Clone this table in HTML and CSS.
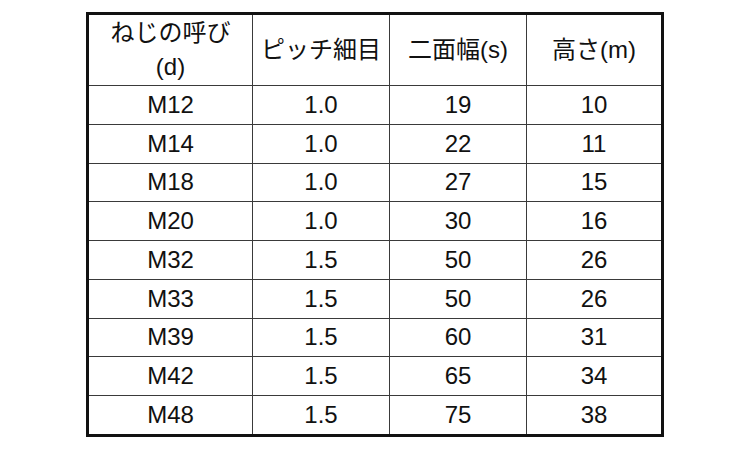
FILE: index.html
```html
<!DOCTYPE html>
<html lang="ja">
<head>
<meta charset="utf-8">
<link rel="stylesheet" href="styles.css">
</head>
<body>
<div class="page">
  <div class="spec">
    <div class="cell head">ねじの呼び<br>(d)</div>
    <div class="cell head">ピッチ細目</div>
    <div class="cell head">二面幅(s)</div>
    <div class="cell head">高さ(m)</div>

    <div class="cell">M12</div><div class="cell">1.0</div><div class="cell">19</div><div class="cell">10</div>
    <div class="cell">M14</div><div class="cell">1.0</div><div class="cell">22</div><div class="cell">11</div>
    <div class="cell">M18</div><div class="cell">1.0</div><div class="cell">27</div><div class="cell">15</div>
    <div class="cell">M20</div><div class="cell">1.0</div><div class="cell">30</div><div class="cell">16</div>
    <div class="cell">M32</div><div class="cell">1.5</div><div class="cell">50</div><div class="cell">26</div>
    <div class="cell">M33</div><div class="cell">1.5</div><div class="cell">50</div><div class="cell">26</div>
    <div class="cell">M39</div><div class="cell">1.5</div><div class="cell">60</div><div class="cell">31</div>
    <div class="cell">M42</div><div class="cell">1.5</div><div class="cell">65</div><div class="cell">34</div>
    <div class="cell">M48</div><div class="cell">1.5</div><div class="cell">75</div><div class="cell">38</div>
  </div>
</div>
</body>
</html>
```

FILE: styles.css
```css
html, body {
  margin: 0;
  padding: 0;
  background: #fff;
}
.page {
  width: 750px;
  height: 450px;
  padding: 12px 0 0 86px;
  box-sizing: border-box;
}
.spec {
  display: grid;
  grid-template-columns: 163px 136px 136px 134px;
  grid-template-rows: 70px repeat(9, 37.78px);
  gap: 1px;
  width: 578px;
  box-sizing: border-box;
  border: 3px solid #111;
  background: #3a3a3a;
  font-family: "Liberation Sans", "Noto Sans CJK JP", sans-serif;
  font-size: 24px;
  color: #111;
}
.cell {
  background: #fff;
  display: flex;
  align-items: center;
  justify-content: center;
  text-align: center;
  line-height: 1;
}
.head {
  line-height: 34px;
}
```
